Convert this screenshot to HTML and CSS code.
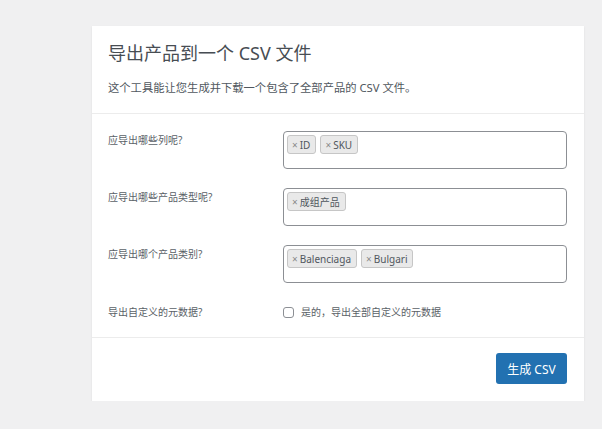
FILE: index.html
```html
<!DOCTYPE html>
<html lang="zh-CN">
<head>
<meta charset="utf-8">
<title>导出产品</title>
<link rel="stylesheet" href="styles.css">
</head>
<body>
<div class="card">
  <header class="card-head">
    <h2 class="title">导出产品到一个 CSV 文件</h2>
    <p class="desc">这个工具能让您生成并下载一个包含了全部产品的 CSV 文件。</p>
  </header>
  <section class="form">
    <div class="row">
      <div class="label">应导出哪些列呢?</div>
      <div class="field">
        <span class="tag"><span class="x">×</span>ID</span>
        <span class="tag"><span class="x">×</span>SKU</span>
      </div>
    </div>
    <div class="row">
      <div class="label">应导出哪些产品类型呢?</div>
      <div class="field">
        <span class="tag"><span class="x">×</span>成组产品</span>
      </div>
    </div>
    <div class="row">
      <div class="label">应导出哪个产品类别?</div>
      <div class="field">
        <span class="tag"><span class="x">×</span>Balenciaga</span>
        <span class="tag"><span class="x">×</span>Bulgari</span>
      </div>
    </div>
    <div class="row row-check">
      <div class="label">导出自定义的元数据?</div>
      <label class="check"><span class="box"></span>是的，导出全部自定义的元数据</label>
    </div>
  </section>
  <footer class="card-foot">
    <button class="btn">生成 CSV</button>
  </footer>
</div>
</body>
</html>
```
FILE: styles.css
```css
html, body {
  margin: 0;
  padding: 0;
}
body {
  background: #f0f0f1;
  font-family: "Noto Sans", "Noto Sans CJK SC", sans-serif;
  color: #50575e;
  padding: 26px 0 0 92px;
}
.card {
  width: 492px;
  height: 375px;
  box-sizing: border-box;
  background: #fff;
  box-shadow: 0 1px 2px rgba(0, 0, 0, 0.08);
  display: flex;
  flex-direction: column;
}
.card-head {
  padding: 15px 16px 16px;
  border-bottom: 1px solid #ececec;
}
.title {
  margin: 0;
  font-size: 18px;
  line-height: 24px;
  font-weight: 400;
  color: #474d53;
}
.desc {
  margin: 14px 0 0;
  font-size: 11.3px;
  line-height: 18px;
  color: #50575e;
}
.form {
  padding: 17px 17px 15px 16px;
  border-bottom: 1px solid #ececec;
  display: flex;
  flex-direction: column;
  gap: 19px;
}
.row {
  display: flex;
  align-items: flex-start;
}
.label {
  width: 175px;
  flex: none;
  font-size: 10px;
  line-height: 16px;
  padding-top: 1px;
  color: #5a6167;
}
.field {
  flex: 1;
  height: 38px;
  box-sizing: border-box;
  border: 1px solid #8c8f94;
  border-radius: 4px;
  padding: 3px;
  display: flex;
  align-items: flex-start;
  gap: 4px;
}
.tag {
  display: inline-flex;
  align-items: center;
  height: 19px;
  box-sizing: border-box;
  padding: 0 5px 0 4px;
  background: #e9e9e9;
  border: 1px solid #c6c6c6;
  border-radius: 3px;
  font-size: 10px;
  color: #50575e;
}
.tag .x {
  color: #8a8a8a;
  font-size: 10px;
  margin-right: 2px;
}
.row-check {
  align-items: center;
  height: 20px;
}
.row-check .label {
  padding-top: 0;
}
.check {
  display: flex;
  align-items: center;
  font-size: 10px;
  line-height: 16px;
  color: #5a6167;
}
.box {
  width: 11px;
  height: 11px;
  box-sizing: border-box;
  border: 1px solid #8c8f94;
  border-radius: 3px;
  margin-right: 7px;
  background: #fff;
}
.card-foot {
  flex: 1;
  display: flex;
  justify-content: flex-end;
  align-items: flex-start;
  padding: 15px 17px 0 0;
}
.btn {
  width: 71px;
  height: 31px;
  border: 0;
  border-radius: 3px;
  background: #2271b1;
  color: #fff;
  font-family: inherit;
  font-size: 12px;
  padding: 0;
}
```
